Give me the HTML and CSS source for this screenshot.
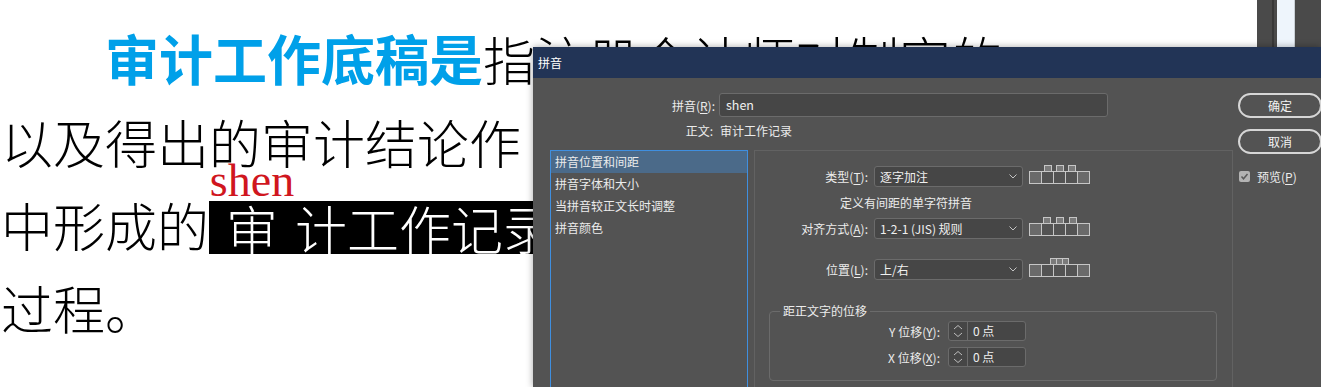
FILE: index.html
```html
<!DOCTYPE html>
<html lang="zh-CN">
<head>
<meta charset="utf-8">
<title>拼音</title>
<link rel="stylesheet" href="styles.css">
</head>
<body>
<div class="app">
  <main class="doc">
    <p class="line l1"><b class="term">审计工作底稿是</b>指注册会计师对制定的</p>
    <p class="line">以及得出的审计结论作</p>
    <p class="line">中形成的<span class="hl"><span class="rb">审<span class="rt">shen</span></span>计工作记录</span>和获取的资料。</p>
    <p class="line">过程。</p>
  </main>
  <div class="strips">
    <div class="s-dark w15"></div>
    <div class="s-line"></div>
    <div class="s-dark w3"></div>
    <div class="s-light"></div>
    <div class="s-dark grow"></div>
  </div>

  <section class="dialog">
    <header class="titlebar">拼音</header>
    <div class="dlg-body">
      <div class="main">
        <div class="field-row">
          <span class="lbl">拼音(<u>R</u>):</span>
          <div class="textbox">shen</div>
        </div>
        <div class="field-row info">
          <span class="lbl">正文:</span>
          <span class="val">审计工作记录</span>
        </div>
        <div class="panes">
          <ul class="cats">
            <li class="sel">拼音位置和间距</li>
            <li>拼音字体和大小</li>
            <li>当拼音较正文长时调整</li>
            <li>拼音颜色</li>
          </ul>
          <div class="pane">
            <div class="opt-row">
              <span class="olbl">类型(<u>T</u>):</span>
              <div class="select"><span>逐字加注</span><svg class="chev" width="8" height="5" viewBox="0 0 8 5"><path d="M0.5 0.5 L4 4 L7.5 0.5"/></svg></div>
              <svg class="ico" width="62" height="20" viewBox="0 0 62 20">
                <rect class="top" x="15.5" y="0.5" width="7" height="6"/>
                <rect class="top" x="27.5" y="0.5" width="7" height="6"/>
                <rect class="top" x="39.5" y="0.5" width="7" height="6"/>
                <rect class="end" x="0.5" y="6.5" width="12" height="12"/>
                <rect class="mid" x="12.5" y="6.5" width="12" height="12"/>
                <rect class="mid" x="24.5" y="6.5" width="12" height="12"/>
                <rect class="mid" x="36.5" y="6.5" width="12" height="12"/>
                <rect class="end" x="48.5" y="6.5" width="12" height="12"/>
              </svg>
            </div>
            <div class="desc">定义有间距的单字符拼音</div>
            <div class="opt-row r2">
              <span class="olbl">对齐方式(<u>A</u>):</span>
              <div class="select"><span>1-2-1 (JIS) 规则</span><svg class="chev" width="8" height="5" viewBox="0 0 8 5"><path d="M0.5 0.5 L4 4 L7.5 0.5"/></svg></div>
              <svg class="ico" width="62" height="20" viewBox="0 0 62 20">
                <rect class="top" x="14.5" y="0.5" width="7" height="6"/>
                <rect class="top" x="27.5" y="0.5" width="7" height="6"/>
                <rect class="top" x="40.5" y="0.5" width="7" height="6"/>
                <rect class="end" x="0.5" y="6.5" width="12" height="12"/>
                <rect class="mid" x="12.5" y="6.5" width="12" height="12"/>
                <rect class="mid" x="24.5" y="6.5" width="12" height="12"/>
                <rect class="mid" x="36.5" y="6.5" width="12" height="12"/>
                <rect class="end" x="48.5" y="6.5" width="12" height="12"/>
              </svg>
            </div>
            <div class="opt-row r3">
              <span class="olbl">位置(<u>L</u>):</span>
              <div class="select"><span>上/右</span><svg class="chev" width="8" height="5" viewBox="0 0 8 5"><path d="M0.5 0.5 L4 4 L7.5 0.5"/></svg></div>
              <svg class="ico" width="62" height="20" viewBox="0 0 62 20">
                <rect class="top" x="21.5" y="0.5" width="6" height="6"/>
                <rect class="top" x="27.5" y="0.5" width="6" height="6"/>
                <rect class="top" x="33.5" y="0.5" width="6" height="6"/>
                <rect class="end" x="0.5" y="6.5" width="12" height="12"/>
                <rect class="mid" x="12.5" y="6.5" width="12" height="12"/>
                <rect class="mid" x="24.5" y="6.5" width="12" height="12"/>
                <rect class="mid" x="36.5" y="6.5" width="12" height="12"/>
                <rect class="end" x="48.5" y="6.5" width="12" height="12"/>
              </svg>
            </div>
            <fieldset class="group">
              <legend>距正文字的位移</legend>
              <div class="spin-row">
                <span class="slbl">Y 位移(<u>Y</u>):</span>
                <div class="spin">
                  <span class="arrows"><svg width="18" height="18" viewBox="0 0 18 18"><path d="M5 7 L9 3.5 L13 7 M5 11 L9 14.5 L13 11"/></svg></span>
                  <span class="num">0 点</span>
                </div>
              </div>
              <div class="spin-row second">
                <span class="slbl">X 位移(<u>X</u>):</span>
                <div class="spin">
                  <span class="arrows"><svg width="18" height="18" viewBox="0 0 18 18"><path d="M5 7 L9 3.5 L13 7 M5 11 L9 14.5 L13 11"/></svg></span>
                  <span class="num">0 点</span>
                </div>
              </div>
            </fieldset>
          </div>
        </div>
      </div>
      <div class="side">
        <button class="btn">确定</button>
        <button class="btn second">取消</button>
        <label class="check"><span class="box"><svg width="11" height="11" viewBox="0 0 11 11"><path d="M2.5 5.5 L4.5 7.8 L8.5 3"/></svg></span>预览(<u>P</u>)</label>
      </div>
    </div>
  </section>
</div>
</body>
</html>
```

FILE: styles.css
```css
html, body {
  margin: 0;
  padding: 0;
  width: 1321px;
  height: 387px;
  overflow: hidden;
  background: #fff;
}

.app {
  position: relative;
  display: flex;
  width: 1321px;
  height: 387px;
}

/* ---------- document ---------- */
.doc {
  flex: none;
  width: 1257px;
  height: 387px;
  box-sizing: border-box;
  padding: 16px 0 0 1px;
  overflow: hidden;
  background: #fff;
}

.line {
  margin: 0;
  font-family: "Noto Sans CJK SC", sans-serif;
  font-size: 52px;
  line-height: 83px;
  font-weight: 300;
  color: #000;
  white-space: nowrap;
}

.l1 { text-indent: 2em; }

.term {
  color: #00a0e9;
  font-size: 54px;
  font-weight: 700;
}

.hl {
  display: inline-block;
  line-height: 53px;
  background: #000;
  color: #fff;
  vertical-align: -3px;
}

.rb {
  display: inline-block;
  position: relative;
  padding: 0 17px;
}

.rt {
  position: absolute;
  left: 0;
  right: 0;
  top: -42px;
  text-align: center;
  font-family: "Liberation Serif", serif;
  font-size: 46px;
  line-height: 44px;
  font-weight: 400;
  color: #d0161e;
}

/* ---------- right strips ---------- */
.strips {
  flex: 1;
  display: flex;
  height: 387px;
}
.s-dark { background: #4a4a4a; }
.w15 { width: 15px; }
.w3 { width: 3px; }
.grow { flex: 1; }
.s-line { width: 2px; background: #383838; }
.s-light {
  width: 17px;
  background: #eef5fc;
  border-right: 1px solid #c9d0d6;
}

/* ---------- dialog ---------- */
.dialog {
  position: absolute;
  left: 533px;
  top: 47px;
  width: 788px;
  height: 340px;
  background: #535353;
  box-shadow: 0 0 7px rgba(0, 0, 0, 0.35);
  overflow: hidden;
  font-family: "Noto Sans CJK SC", sans-serif;
  font-size: 12px;
  color: #ececec;
}

.titlebar {
  height: 31px;
  line-height: 31px;
  padding-left: 5px;
  background: #223456;
  color: #fff;
  font-size: 12px;
}

.dlg-body {
  display: flex;
  padding: 15px 0 0 17px;
}

.main {
  flex: none;
  width: 683px;
}

.field-row {
  display: flex;
  align-items: center;
}

.lbl {
  flex: none;
  width: 165px;
  text-align: right;
  margin-right: 4px;
}

u {
  text-decoration: underline;
  text-underline-offset: 2px;
}

.textbox {
  width: 389px;
  height: 24px;
  box-sizing: border-box;
  border: 1px solid #6b6b6b;
  border-radius: 3px;
  background: #464646;
  padding-left: 6px;
  line-height: 22px;
  font-size: 12.5px;
  color: #f0f0f0;
}

.info {
  height: 20px;
  margin-top: 3px;
}
.info .lbl { width: 163px; margin-right: 7px; }

.panes {
  display: flex;
  gap: 6px;
  margin-top: 10px;
}

.cats {
  flex: none;
  width: 198px;
  height: 240px;
  box-sizing: border-box;
  margin: 0;
  padding: 0;
  list-style: none;
  border: 1px solid #3f8fe0;
}

.cats li {
  height: 22px;
  line-height: 22px;
  padding-left: 4px;
  white-space: nowrap;
}

.cats li.sel { background: #4b6a89; }

.pane {
  flex: none;
  width: 479px;
  height: 240px;
  box-sizing: border-box;
  border: 1px solid #626262;
  padding-top: 15px;
}

.opt-row {
  display: flex;
  align-items: center;
  height: 21px;
}
.r2 { margin-top: 5px; }
.r3 { margin-top: 20px; }

.olbl {
  flex: none;
  width: 113px;
  margin-right: 6px;
  text-align: right;
  white-space: nowrap;
}

.select {
  flex: none;
  display: flex;
  align-items: center;
  justify-content: space-between;
  width: 149px;
  height: 21px;
  box-sizing: border-box;
  border: 1px solid #6b6b6b;
  border-radius: 3px;
  background: #464646;
  padding: 0 5px 0 5px;
  color: #f0f0f0;
  white-space: nowrap;
}

.chev path {
  fill: none;
  stroke: #c4c4c4;
  stroke-width: 1;
}

.ico {
  flex: none;
  align-self: flex-start;
  margin: -1px 0 0 6px;
}
.ico rect { stroke: #c6c6c6; stroke-width: 1; }
.ico .top { fill: #7a7a7a; }
.ico .end { fill: #6a6a6a; }
.ico .mid { fill: none; }

.desc {
  margin-top: 6px;
  height: 20px;
  line-height: 20px;
  padding-left: 85px;
}

.group {
  margin: 21px 15px 0 14px;
  padding: 0 0 13px 0;
  border: 1px solid #6b6b6b;
  border-radius: 4px;
  min-width: 0;
}

.group legend {
  margin-left: 10px;
  padding: 0 3px;
  line-height: 20px;
  height: 20px;
}

.spin-row {
  display: flex;
  align-items: center;
  height: 20px;
}
.spin-row.second { margin-top: 6px; }

.slbl {
  flex: none;
  width: 170px;
  margin-right: 8px;
  text-align: right;
  white-space: nowrap;
}

.spin {
  display: flex;
  width: 78px;
  height: 20px;
  box-sizing: border-box;
  border: 1px solid #6b6b6b;
  border-radius: 3px;
  background: #464646;
}

.arrows {
  flex: none;
  width: 18px;
  border-right: 1px solid #6b6b6b;
  display: flex;
  align-items: center;
}
.arrows path {
  fill: none;
  stroke: #bdbdbd;
  stroke-width: 1;
}

.num {
  padding-left: 5px;
  line-height: 18px;
  color: #f0f0f0;
}

/* ---------- side buttons ---------- */
.side {
  flex: none;
  width: 84px;
  margin-left: 5px;
  display: flex;
  flex-direction: column;
  align-items: flex-start;
}

.btn {
  width: 84px;
  height: 25px;
  box-sizing: border-box;
  border: 2px solid #d6d6d6;
  border-radius: 13px;
  background: transparent;
  color: #f2f2f2;
  font-family: "Noto Sans CJK SC", sans-serif;
  font-size: 12px;
  padding: 0;
  line-height: 21px;
}
.btn.second { margin-top: 11px; }

.check {
  display: flex;
  align-items: center;
  margin-top: 16px;
  margin-left: 1px;
  height: 12px;
  white-space: nowrap;
}

.check .box {
  flex: none;
  width: 11px;
  height: 11px;
  margin-right: 7px;
  border-radius: 2px;
  background: #b3b3b3;
  display: flex;
}
.check .box path {
  fill: none;
  stroke: #5a5a5a;
  stroke-width: 1.5;
}
```
